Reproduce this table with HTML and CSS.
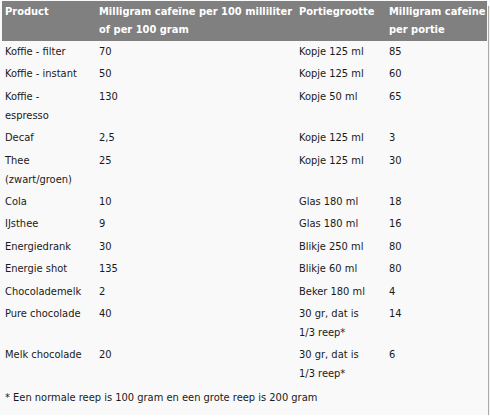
FILE: index.html
```html
<!DOCTYPE html>
<html lang="nl">
  <head>
    <meta charset="UTF-8" />
    <title>Cafeïne</title>
    <link rel="stylesheet" href="styles.css">
  </head>
  <body>
    <div class="wrap">
      <table class="cafeine">
        <thead>
          <tr>
            <th class="c1">Product</th>
            <th class="c2">Milligram cafeïne per 100 milliliter of per 100 gram</th>
            <th class="c3">Portiegrootte</th>
            <th class="c4">Milligram cafeïne per portie</th>
          </tr>
        </thead>
        <tbody>
          <tr><td>Koffie - filter</td><td>70</td><td>Kopje 125 ml</td><td>85</td></tr>
          <tr><td>Koffie - instant</td><td>50</td><td>Kopje 125 ml</td><td>60</td></tr>
          <tr><td>Koffie -<br>espresso</td><td>130</td><td>Kopje 50 ml</td><td>65</td></tr>
          <tr><td>Decaf</td><td>2,5</td><td>Kopje 125 ml</td><td>3</td></tr>
          <tr><td>Thee<br>(zwart/groen)</td><td>25</td><td>Kopje 125 ml</td><td>30</td></tr>
          <tr><td>Cola</td><td>10</td><td>Glas 180 ml</td><td>18</td></tr>
          <tr><td>IJsthee</td><td>9</td><td>Glas 180 ml</td><td>16</td></tr>
          <tr><td>Energiedrank</td><td>30</td><td>Blikje 250 ml</td><td>80</td></tr>
          <tr><td>Energie shot</td><td>135</td><td>Blikje 60 ml</td><td>80</td></tr>
          <tr><td>Chocolademelk</td><td>2</td><td>Beker 180 ml</td><td>4</td></tr>
          <tr><td>Pure chocolade</td><td>40</td><td>30 gr, dat is<br>1/3 reep*</td><td>14</td></tr>
          <tr><td>Melk chocolade</td><td>20</td><td>30 gr, dat is<br>1/3 reep*</td><td>6</td></tr>
        </tbody>
      </table>
      <p class="note">* Een normale reep is 100 gram en een grote reep is 200 gram</p>
    </div>
  </body>
</html>
```

FILE: styles.css
```css
body {
  margin: 0;
  background: #ffffff;
  font-family: "DejaVu Sans Condensed", "Liberation Sans", sans-serif;
  font-size: 11px;
  color: #1a1a1a;
}

.wrap {
  width: 485px;
  padding: 1px 1px 2px 2px;
  background-color: #f9f9f9;
  box-shadow: 2px 5px 1px -1px #aaaaaa;
}

.cafeine {
  width: 100%;
  border-collapse: collapse;
  table-layout: fixed;
}

.cafeine th {
  background-color: #808080;
  color: #ffffff;
  font-weight: bold;
  text-align: left;
  vertical-align: top;
  line-height: 18px;
  padding: 2px 0 2px 3px;
}

.c1 { width: 91px; }
.c2 { width: 197px; }
.c3 { width: 87px; }

.cafeine td {
  vertical-align: top;
  line-height: 19px;
  padding: 2px 0 1.4px 3px;
}

.cafeine tbody tr:first-child td {
  padding-top: 1px;
}

.note {
  margin: 0;
  padding: 3px 3px 6px 3px;
  line-height: 19px;
}
```
